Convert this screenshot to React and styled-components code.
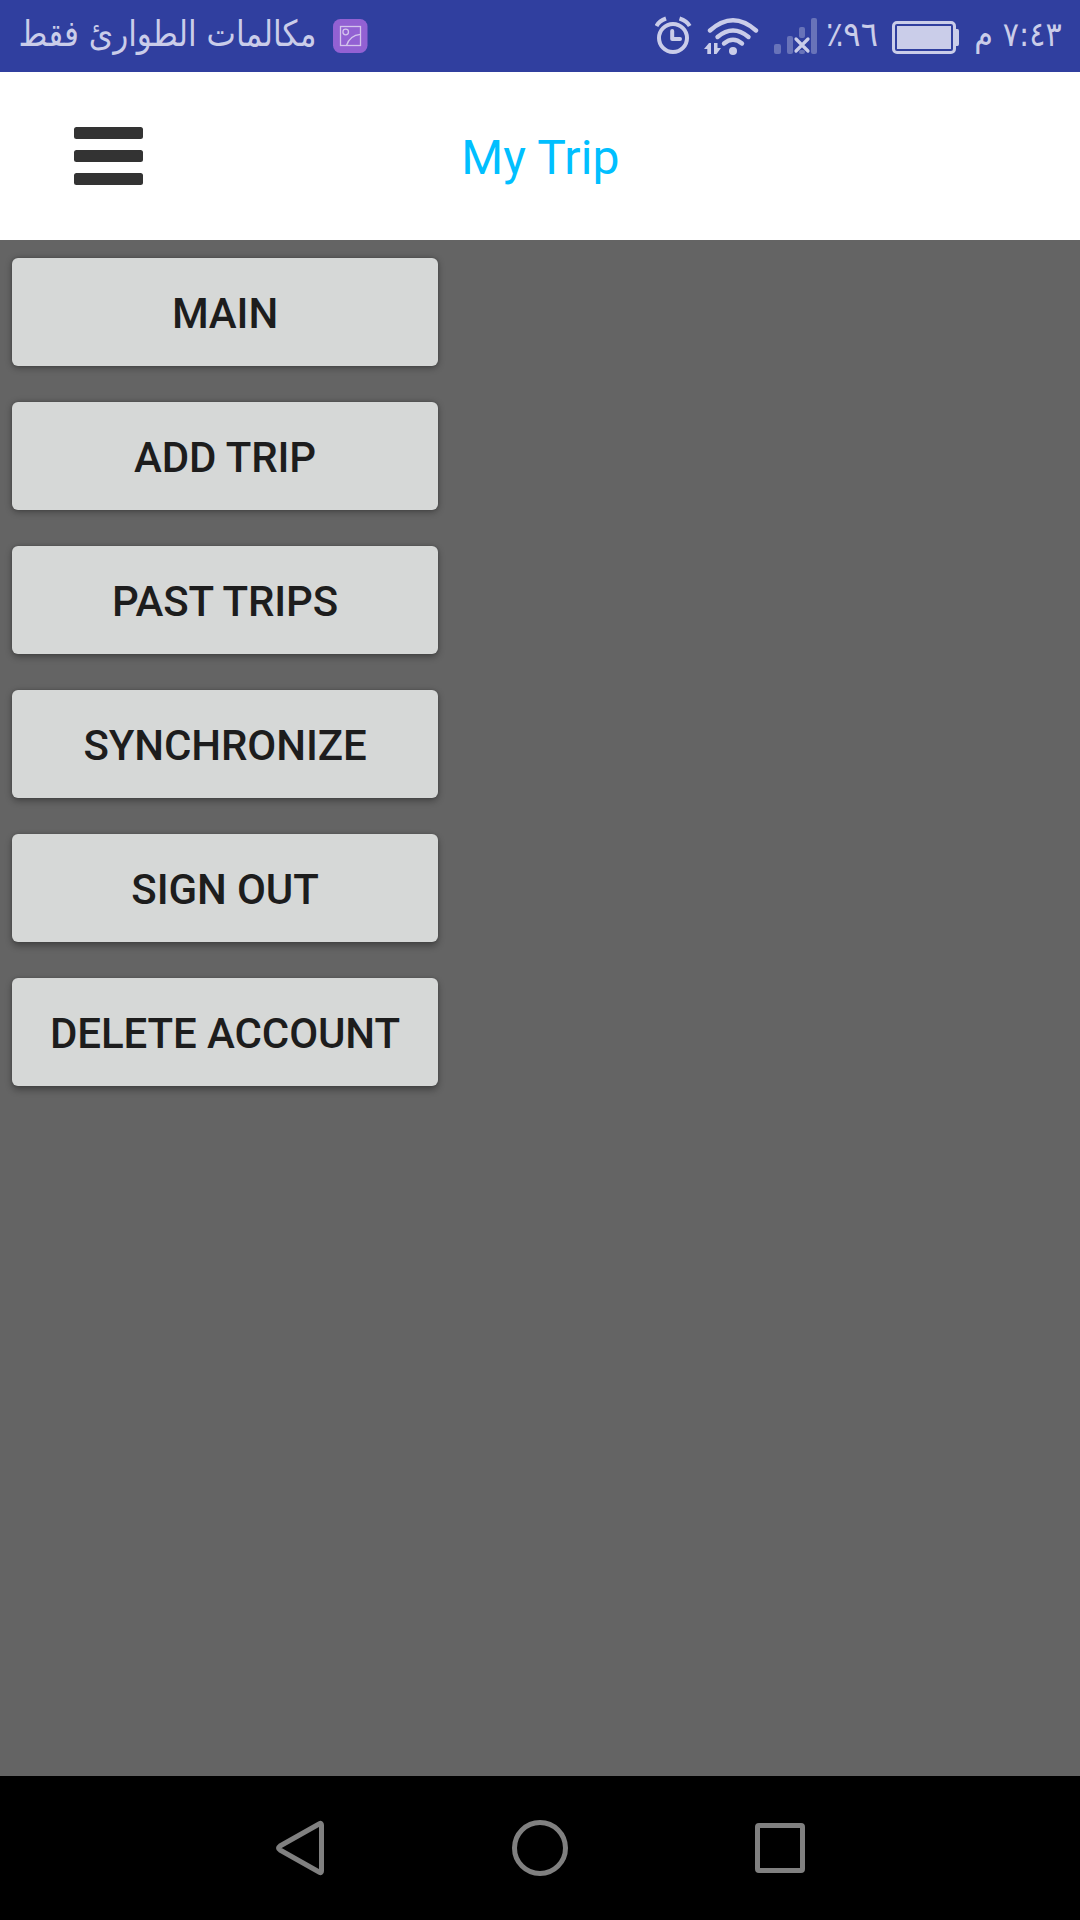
import React from "react";
import styled, { createGlobalStyle } from "styled-components";

const ink = "#cacde9";

const GlobalStyle = createGlobalStyle`
  * { box-sizing: border-box; }
  body { margin: 0; background: #646464; }
`;

const Screen = styled.div`
  width: 1080px;
  height: 1920px;
  display: flex;
  flex-direction: column;
  background: #646464;
  font-family: Roboto, "Noto Sans", sans-serif;
  overflow: hidden;
`;

const StatusBar = styled.div`
  height: 72px;
  flex: none;
  display: flex;
  align-items: flex-start;
  justify-content: space-between;
  padding: 0 19px 0 20px;
  background: #303f9f;
  color: ${ink};
`;

const StatusGroup = styled.div`
  display: flex;
  height: 72px;
  align-items: flex-start;
`;

const StatusText = styled.div`
  width: ${(p) => p.$width}px;
  margin-left: ${(p) => p.$gap || 0}px;
  height: 72px;
  line-height: 68px;
  display: flex;
  justify-content: center;
  white-space: nowrap;
  font-family: "DejaVu Sans", sans-serif;
  font-size: ${(p) => p.$size}px;
  transform: scaleX(${(p) => p.$squeeze || 1});
`;

const StatusIcon = styled.svg`
  display: block;
  flex: none;
  margin-left: ${(p) => p.$gap || 0}px;
`;

const Header = styled.header`
  height: 168px;
  flex: none;
  display: grid;
  grid-template-columns: 216px 1fr 216px;
  align-items: center;
  background: #fff;
`;

const MenuButton = styled.button`
  display: flex;
  flex-direction: column;
  gap: 11px;
  padding: 0 0 1px 73.5px;
  border: 0;
  background: none;
`;

const MenuLine = styled.span`
  width: 69px;
  height: 12px;
  border-radius: 2.5px;
  background: #333;
`;

const Title = styled.h1`
  margin: 0;
  padding: 3px 0 0 1px;
  text-align: center;
  font-size: 48px;
  line-height: 56px;
  font-weight: 400;
  letter-spacing: 0.15px;
  color: #00bfff;
`;

const Drawer = styled.nav`
  flex: 1;
  display: flex;
  flex-direction: column;
  gap: 36px;
  width: 450px;
  padding: 18px 12px;
`;

const DrawerButton = styled.button`
  height: 108px;
  padding: 4px 0 0;
  border: 0;
  border-radius: 6px;
  background: #d6d8d7;
  box-shadow: 0 ${(p) => p.$lift}px 7px rgba(0, 0, 0, 0.32), 0 0 3px rgba(0, 0, 0, 0.16);
  font-family: Roboto, sans-serif;
  font-size: 42px;
  font-weight: 500;
  line-height: 50px;
  letter-spacing: -0.1px;
  color: #1d1d1d;
`;

const NavBar = styled.footer`
  height: 144px;
  flex: none;
  display: flex;
  justify-content: center;
  align-items: center;
  gap: 180px;
  background: #000;
`;

const NavIcon = styled.svg`
  display: block;
  fill: none;
  stroke: #808080;
  stroke-width: 5;
  stroke-linejoin: round;
`;

const items = ["MAIN", "ADD TRIP", "PAST TRIPS", "SYNCHRONIZE", "SIGN OUT", "DELETE ACCOUNT"];

export default function App() {
  return (
    <Screen>
      <GlobalStyle />
      <StatusBar>
        <StatusGroup>
          <StatusText dir="rtl" $width={295} $size={36} $squeeze={0.866}>مكالمات الطوارئ فقط</StatusText>
          <StatusIcon $gap={18} width="35" height="72" viewBox="333 0 35 72">
            <rect x="333" y="19" width="34.5" height="34" rx="7.5" fill="#9261d3" />
            <g fill="none" stroke="#d3c4ec" strokeWidth="1.3">
              <rect x="340.5" y="26.5" width="20" height="19" />
              <circle cx="345.7" cy="32" r="2.8" />
              <path d="M346.5 45.5C348.5 39 353 35 360.5 34.3" />
            </g>
          </StatusIcon>
        </StatusGroup>
        <StatusGroup>
          <StatusIcon width="37" height="72" viewBox="655 0 37 72">
            <g fill="none" stroke={ink} strokeWidth="4">
              <circle cx="673" cy="38" r="14" />
              <path d="M656.5 26Q659 21 666 18.5M679.5 18.5Q687 21 689.7 26" />
              <path d="M672.2 31V39H680" strokeLinecap="round" strokeLinejoin="round" />
            </g>
          </StatusIcon>
          <StatusIcon $gap={12} width="55" height="72" viewBox="704 0 55 72">
            <g fill="none" stroke={ink} strokeWidth="4.4" strokeLinecap="round">
              <path d="M710 30.5Q733 10 756 30.5" />
              <path d="M717.5 37Q733 24 748.5 37" />
              <path d="M724 43.5Q733 36 742 43.5" />
            </g>
            <circle cx="733" cy="51" r="4" fill={ink} />
            <path d="M704 49L709 43H711V54H707.3V49ZM714 43H717.5V48H721L716.5 54H714Z" fill={ink} />
          </StatusIcon>
          <StatusIcon $gap={15} width="44" height="72" viewBox="774 0 44 72">
            <g fill="#6873b9">
              <rect x="774" y="44" width="7" height="10" rx="2" />
              <rect x="787" y="36" width="6" height="18" rx="2" />
              <rect x="799" y="27" width="6" height="11" rx="2" />
              <rect x="799" y="50" width="6" height="4" rx="2" />
              <rect x="811" y="18" width="6" height="36" rx="2" />
            </g>
            <path d="M796 39L808 51M808 39L796 51" stroke={ink} strokeWidth="3.2" strokeLinecap="round" />
          </StatusIcon>
          <StatusText dir="rtl" $gap={9} $width={50} $size={34} $squeeze={0.95}>٩٦٪</StatusText>
          <StatusIcon $gap={15} width="67" height="72" viewBox="892 0 67 72">
            <rect x="893.5" y="22.5" width="61" height="30" rx="3.5" fill="none" stroke={ink} strokeWidth="3" />
            <rect x="897" y="26" width="54" height="23" fill={ink} />
            <path d="M956 29H957.5Q959 29 959 31V44Q959 46 957.5 46H956Z" fill={ink} />
          </StatusIcon>
          <StatusText dir="rtl" $gap={16} $width={86} $size={34} $squeeze={0.89}>٧:٤٣ م</StatusText>
        </StatusGroup>
      </StatusBar>
      <Header>
        <MenuButton aria-label="Menu">
          <MenuLine />
          <MenuLine />
          <MenuLine />
        </MenuButton>
        <Title>My Trip</Title>
      </Header>
      <Drawer>
        {items.map((label, i) => (
          <DrawerButton key={label} $lift={1.5 + i * 0.4}>{label}</DrawerButton>
        ))}
      </Drawer>
      <NavBar>
        <NavIcon width="60" height="60" viewBox="270 1818 60 60">
          <path d="M319.5 1823.7Q321.5 1822.6 321.5 1825V1871Q321.5 1873.4 319.5 1872.3L280 1850Q277 1848 280 1846Z" />
        </NavIcon>
        <NavIcon width="60" height="60" viewBox="510 1818 60 60">
          <circle cx="540" cy="1848" r="25.5" />
        </NavIcon>
        <NavIcon width="60" height="60" viewBox="750 1818 60 60">
          <rect x="757.5" y="1825.5" width="45" height="45" rx="1.5" />
        </NavIcon>
      </NavBar>
    </Screen>
  );
}
